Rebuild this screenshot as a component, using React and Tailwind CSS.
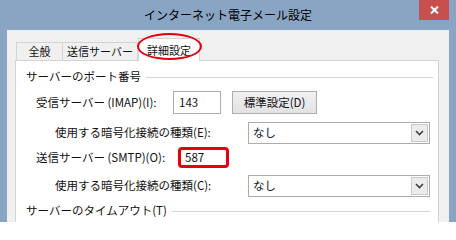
import React from 'react';

const Chevron = () => (
    <svg width="9" height="6" viewBox="0 0 9 6">
        <path d="M1 1 L4.5 4.5 L8 1" fill="none" stroke="#404040" strokeWidth="1.6" />
    </svg>
);

const Select = ({ value }) => (
    <div className="w-[182px] h-[22px] bg-white border border-[#acacac] flex items-center justify-between">
        <span className="pl-[4px] text-[11.5px] leading-none">{value}</span>
        <div className="w-[17px] h-[18px] mr-[1px] bg-[#ececec] border border-[#c9c9c9] flex items-center justify-center">
            <Chevron />
        </div>
    </div>
);

const GroupHeader = ({ label, lineEnd }) => (
    <div className="flex items-center h-[16px] pl-[10px]">
        <span className="text-[11.5px] leading-none whitespace-nowrap">{label}</span>
        <div className={`flex-1 h-px bg-[#d5d5d5] ml-[5px] ${lineEnd}`} />
    </div>
);

const tabs = [
    { label: "全般", w: "w-[47px]" },
    { label: "送信サーバー", w: "w-[75px]" },
];

export default function App() {
    return (
        <div className="w-[456px] h-[222px] overflow-hidden bg-[#8aa4c4] flex flex-col font-['Noto_Sans_CJK_JP',sans-serif] text-[#111]">
            {/* title bar */}
            <div className="relative h-[30px] shrink-0 flex items-center justify-center">
                <span className="text-[12px] leading-none text-black pb-[1px]">インターネット電子メール設定</span>
                <div className="absolute right-[7px] top-0 w-[30px] h-[20px] bg-[#c7504f] flex items-center justify-center">
                    <svg width="9" height="8" viewBox="0 0 9 8">
                        <path d="M1 0.5 L8 7.5 M8 0.5 L1 7.5" stroke="white" strokeWidth="2" />
                    </svg>
                </div>
            </div>

            {/* dialog body */}
            <div className="flex-1 mx-[7px] bg-[#f0f0f0] pt-[8px] pl-[8px] pr-[10px] flex flex-col">
                {/* tabs */}
                <div className="flex items-end h-[22px] ml-[1px]">
                    {tabs.map((tab, i) => (
                        <div
                            key={i}
                            className={`${tab.w} h-[18px] bg-[#f0f0f0] border border-b-0 border-[#d4d4d4] ${i > 0 ? 'border-l-0' : ''} flex items-center justify-center text-[11px] leading-none`}
                        >
                            {tab.label}
                        </div>
                    ))}
                    <div className="relative w-[62px] h-[23px] -mb-px bg-white border border-b-0 border-[#d4d4d4] flex items-center justify-center text-[11px] leading-none z-10">
                        詳細設定
                        <div className="absolute -left-[2px] -top-[6px] w-[65px] h-[27px] rounded-[50%] border-[2.5px] border-[#e3000f]" />
                    </div>
                </div>

                {/* panel */}
                <div className="flex-1 bg-white border border-b-0 border-[#d4d4d4] pt-[8px] flex flex-col">
                    <GroupHeader label="サーバーのポート番号" lineEnd="mr-[5px]" />

                    <div className="flex items-center mt-[6px] pl-[20px]">
                        <span className="w-[137px] text-[11.5px] leading-none">受信サーバー (IMAP)(I):</span>
                        <div className="w-[48px] h-[23px] border border-[#abadb3] bg-white flex items-center pl-[5px] text-[11.5px] leading-none">143</div>
                        <div className="ml-[11px] w-[85px] h-[23px] border border-[#adadad] bg-gradient-to-b from-[#f0f0f0] to-[#e3e3e3] flex items-center justify-center text-[11.5px] leading-none">
                            標準設定(D)
                        </div>
                    </div>

                    <div className="flex items-center mt-[8px] pl-[39px]">
                        <span className="w-[193px] text-[11.5px] leading-none">使用する暗号化接続の種類(E):</span>
                        <Select value="なし" />
                    </div>

                    <div className="flex items-center mt-[3px] pl-[20px]">
                        <span className="w-[142px] text-[11.5px] leading-none">送信サーバー (SMTP)(O):</span>
                        <div className="w-[51px] h-[21px] rounded-[4px] border-[3px] border-[#e3000f] bg-white flex items-center pl-[4px] text-[11.5px] leading-none">587</div>
                    </div>

                    <div className="flex items-center mt-[7px] pl-[39px]">
                        <span className="w-[193px] text-[11.5px] leading-none">使用する暗号化接続の種類(C):</span>
                        <Select value="なし" />
                    </div>

                    <div className="mt-[6px]">
                        <GroupHeader label="サーバーのタイムアウト(T)" lineEnd="mr-[8px]" />
                    </div>
                </div>
            </div>
        </div>
    );
}
